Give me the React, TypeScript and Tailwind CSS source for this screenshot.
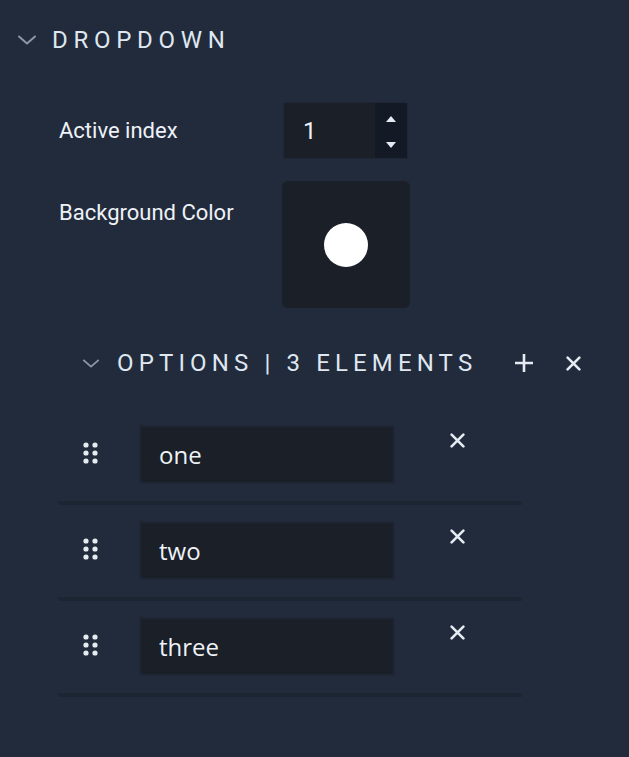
import React from "react";

const Chevron = ({ className = "" }: { className?: string }) => (
  <svg viewBox="0 0 20 10" className={className} fill="none">
    <path d="M2 1.5 L10 8.5 L18 1.5" stroke="#8f97a5" strokeWidth="2" strokeLinecap="round" strokeLinejoin="round" />
  </svg>
);

const XIcon = ({ size = 14 }: { size?: number }) => (
  <svg width={size} height={size} viewBox="0 0 14 14" fill="none">
    <path d="M1.5 1.5 L12.5 12.5 M12.5 1.5 L1.5 12.5" stroke="#e6ebf2" strokeWidth="2.4" strokeLinecap="round" />
  </svg>
);

const Handle = () => (
  <svg width="15" height="22" viewBox="0 0 15 22">
    {[3, 11, 19].map((y) =>
      [3, 12].map((x) => <circle key={`${x}-${y}`} cx={x} cy={y} r="2.6" fill="#e6ebf2" />)
    )}
  </svg>
);

const Row = ({ value }: { value: string }) => (
  <div className="flex flex-col">
    <div className="flex items-start h-[76px]">
      <div className="w-[81px] pl-[25px] pt-[17px] flex">
        <Handle />
      </div>
      <div className="w-[256px] h-[59px] border-2 border-[#1f2737] bg-[#1a1f28] flex items-center pl-[18px]">
        <span className="text-[24px] text-[#eef2f7]" style={{ fontFamily: '"Open Sans", sans-serif' }}>
          {value}
        </span>
      </div>
      <div className="pl-[55px] pt-[8px]">
        <XIcon size={15} />
      </div>
    </div>
    <div className="w-[464px] h-[4px] bg-[#1d2533]" />
    <div className="h-[16px]" />
  </div>
);

export default function App() {
  return (
    <div
      className="w-[629px] h-[757px] bg-[#222b3c] text-[#eef2f7] overflow-hidden"
      style={{ fontFamily: 'Roboto, "Liberation Sans", sans-serif' }}
    >
      <div className="flex items-center h-[40px] mt-[20px] pl-[17px]">
        <Chevron className="w-[20px] h-[10px]" />
        <span className="ml-[15px] text-[24px] tracking-[0.238em] text-[#dfe7f1]">DROPDOWN</span>
      </div>

      <div className="pl-[59px] mt-[42px]">
        <div className="flex items-center">
          <div className="w-[224px] text-[22px]">Active index</div>
          <div className="w-[125px] h-[57px] bg-[#1a1f28] border border-[#1f2737] flex">
            <div className="flex-1 flex items-center pl-[19px] text-[24px]">1</div>
            <div className="w-[32px] bg-[#131a26] flex flex-col items-center justify-between pt-[13px] pb-[10px]">
              <svg width="10" height="6" viewBox="0 0 10 6"><path d="M0 6 L5 0 L10 6 Z" fill="#e6ebf2" /></svg>
              <svg width="10" height="6" viewBox="0 0 10 6"><path d="M0 0 L5 6 L10 0 Z" fill="#e6ebf2" /></svg>
            </div>
          </div>
        </div>
        <div className="flex items-start mt-[22px]">
          <div className="w-[223px] text-[22px] pt-[15px]">Background Color</div>
          <div className="w-[128px] h-[127px] rounded-[6px] bg-[#1a1f28] flex items-center justify-center">
            <div className="w-[44px] h-[44px] rounded-full bg-white" />
          </div>
        </div>
      </div>

      <div className="flex items-center h-[40px] mt-[35px] pl-[82px]">
        <Chevron className="w-[18px] h-[9px]" />
        <span className="ml-[17px] text-[24px] tracking-[0.214em] text-[#dfe7f1]">OPTIONS | 3 ELEMENTS</span>
        <svg className="ml-[37px]" width="20" height="20" viewBox="0 0 20 20">
          <path d="M10 1 V19 M1 10 H19" stroke="#e6ebf2" strokeWidth="2.6" />
        </svg>
        <div className="ml-[32px] flex">
          <XIcon size={15} />
        </div>
      </div>

      <div className="pl-[58px] mt-[42px]">
        <Row value="one" />
        <Row value="two" />
        <Row value="three" />
      </div>
    </div>
  );
}
